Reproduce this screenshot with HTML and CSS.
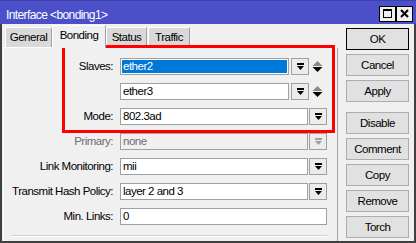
FILE: index.html
```html
<!DOCTYPE html>
<html>
<head>
<meta charset="utf-8">
<link rel="stylesheet" href="styles.css">
</head>
<body>
<div class="window">
  <div class="titlebar">
    <span class="title">Interface &lt;bonding1&gt;</span>
    <div class="wbtns">
      <span class="wbtn"><svg width="15" height="14" viewBox="0 0 15 14"><rect x="3.5" y="2.5" width="8" height="8" fill="none" stroke="#000"/><rect x="3" y="2" width="9" height="2" fill="#000"/></svg></span>
      <span class="wbtn"><svg width="15" height="14" viewBox="0 0 15 14"><path d="M4 3L11 10M11 3L4 10" stroke="#000" stroke-width="2"/></svg></span>
    </div>
  </div>
  <div class="body">
    <div class="left">
      <div class="tabs">
        <span class="tab t-general">General</span>
        <span class="tab active t-bonding">Bonding</span>
        <span class="tab t-status">Status</span>
        <span class="tab t-traffic">Traffic</span>
      </div>
      <div class="panel">
        <div class="form">
          <span class="label">Slaves:</span>
          <div class="ctrl">
            <div class="field short sel"><span class="fill">ether2</span></div>
            <span class="dd gap2"><svg width="7" height="7" viewBox="0 0 7 7"><rect x="0" y="0" width="7" height="2"/><path d="M0 3H7L3.5 7Z"/></svg></span>
            <span class="spin"><svg width="11" height="13" viewBox="0 0 11 13"><path d="M0.5 6L5.5 1L10.5 6Z" fill="#8a8a8a"/><path d="M0.5 7H10.5L5.5 12Z" fill="#000"/></svg></span>
          </div>
          <span class="label"></span>
          <div class="ctrl">
            <div class="field short">ether3</div>
            <span class="dd gap2"><svg width="7" height="7" viewBox="0 0 7 7"><rect x="0" y="0" width="7" height="2"/><path d="M0 3H7L3.5 7Z"/></svg></span>
            <span class="spin"><svg width="11" height="13" viewBox="0 0 11 13"><path d="M0.5 6L5.5 1L10.5 6Z" fill="#8a8a8a"/><path d="M0.5 7H10.5L5.5 12Z" fill="#000"/></svg></span>
          </div>
          <span class="label">Mode:</span>
          <div class="ctrl">
            <div class="field mid">802.3ad</div>
            <span class="dd"><svg width="7" height="7" viewBox="0 0 7 7"><rect x="0" y="0" width="7" height="2"/><path d="M0 3H7L3.5 7Z"/></svg></span>
          </div>
          <span class="label disabled">Primary:</span>
          <div class="ctrl">
            <div class="field mid off">none</div>
            <span class="dd off"><svg width="7" height="7" viewBox="0 0 7 7"><rect x="0" y="0" width="7" height="2"/><path d="M0 3H7L3.5 7Z"/></svg></span>
          </div>
          <span class="label">Link Monitoring:</span>
          <div class="ctrl">
            <div class="field mid">mii</div>
            <span class="dd"><svg width="7" height="7" viewBox="0 0 7 7"><rect x="0" y="0" width="7" height="2"/><path d="M0 3H7L3.5 7Z"/></svg></span>
          </div>
          <span class="label">Transmit Hash Policy:</span>
          <div class="ctrl">
            <div class="field mid">layer 2 and 3</div>
            <span class="dd"><svg width="7" height="7" viewBox="0 0 7 7"><rect x="0" y="0" width="7" height="2"/><path d="M0 3H7L3.5 7Z"/></svg></span>
          </div>
          <span class="label">Min. Links:</span>
          <div class="ctrl">
            <div class="field full">0</div>
          </div>
        </div>
        <div class="sep"></div>
      </div>
    </div>
    <div class="actions">
      <button class="btn default">OK</button>
      <button class="btn">Cancel</button>
      <button class="btn">Apply</button>
      <button class="btn spaced">Disable</button>
      <button class="btn">Comment</button>
      <button class="btn">Copy</button>
      <button class="btn">Remove</button>
      <button class="btn">Torch</button>
    </div>
  </div>
  <div class="highlight"></div>
</div>
</body>
</html>
```
FILE: styles.css
```css
* { box-sizing: border-box; }
html, body { margin: 0; padding: 0; background: #f0f0f0; }
body {
  font-family: "Liberation Sans", Arial, sans-serif;
  font-size: 11.5px;
  letter-spacing: -0.5px;
  color: #000;
}
.window {
  position: relative;
  width: 416px;
  height: 243px;
  background: #f0f0f0;
}
.titlebar {
  height: 24px;
  background: #4b4fc8;
  border-top: 1px solid #3d40a8;
  display: flex;
  justify-content: space-between;
  align-items: flex-start;
}
.title {
  color: #fff;
  font-size: 12px;
  letter-spacing: -0.6px;
  line-height: 14px;
  padding: 7px 0 0 6px;
}
.wbtns {
  display: flex;
  gap: 2px;
  margin: 6px 4px 0 0;
}
.wbtn {
  width: 15px;
  height: 14px;
  background: #f0f0f0;
  outline: 1px solid #000;
  display: flex;
}
.body {
  height: 219px;
  display: flex;
  border: 2px solid #404040;
  border-top: 0;
  padding-left: 1px;
}
.left {
  width: 335px;
  padding-top: 1px;
  display: flex;
  flex-direction: column;
}
.tabs {
  height: 22px;
  display: flex;
  align-items: flex-end;
  margin-left: 2px;
}
.tab {
  height: 20px;
  line-height: 19px;
  text-align: center;
  background: #d9d9d9;
  border-top: 1px solid #fff;
  border-left: 1px solid #fff;
  border-right: 1px solid #a0a0a0;
}
.tab.active {
  height: 23px;
  line-height: 19px;
  margin-bottom: -1px;
  background: #f0f0f0;
  position: relative;
  z-index: 1;
}
.t-general { width: 47px; }
.t-bonding { width: 54px; }
.t-status { width: 41px; }
.t-traffic { width: 42px; margin-left: 1px; }
.panel {
  flex: 1;
  border-top: 1px solid #fff;
  border-left: 1px solid #fff;
  border-right: 1px solid #a0a0a0;
  padding-top: 10px;
}
.form {
  display: grid;
  grid-template-columns: 109px 1fr;
  column-gap: 7px;
  row-gap: 8px;
}
.label {
  height: 17px;
  line-height: 17px;
  text-align: right;
  white-space: nowrap;
}
.label.disabled { color: #6d6d6d; }
.ctrl {
  display: flex;
  align-items: center;
  height: 17px;
}
.field {
  height: 17px;
  border: 1px solid #a0a0a0;
  background: #fff;
  line-height: 15px;
  padding-left: 2px;
  white-space: nowrap;
}
.field.short { width: 169px; }
.field.mid { width: 188px; }
.field.full { width: 207px; }
.field.off { background: #f0f0f0; color: #6d6d6d; }
.field.sel { padding: 1px; }
.fill {
  display: block;
  height: 13px;
  line-height: 13px;
  background: #0078d7;
  color: #fff;
  padding-left: 1px;
}
.dd {
  width: 18px;
  height: 17px;
  margin-left: 1px;
  border: 1px solid #a0a0a0;
  background: #ececec;
  display: flex;
  align-items: center;
  justify-content: center;
  fill: #000;
}
.dd.gap2 { margin-left: 2px; }
.dd.off { fill: #a0a0a0; }
.spin {
  width: 11px;
  height: 13px;
  margin-left: 3px;
  display: flex;
}
.sep {
  margin: 10px 0 0 8px;
  width: 315px;
  border-top: 1px solid #d0d0d0;
  border-bottom: 1px solid #fff;
}
.actions {
  width: 63px;
  margin-left: 8px;
  padding-top: 4px;
  display: flex;
  flex-direction: column;
  gap: 4px;
}
.btn {
  height: 22px;
  padding: 0;
  font: inherit;
  letter-spacing: -0.5px;
  color: #000;
  background: #e1e1e1;
  border: 1px solid #adadad;
  text-align: center;
}
.btn.default { border-color: #000; }
.btn.spaced { margin-top: 6px; }
.highlight {
  position: absolute;
  left: 62px;
  top: 45px;
  width: 273px;
  height: 88px;
  border: 3px solid #ff0000;
}
```
